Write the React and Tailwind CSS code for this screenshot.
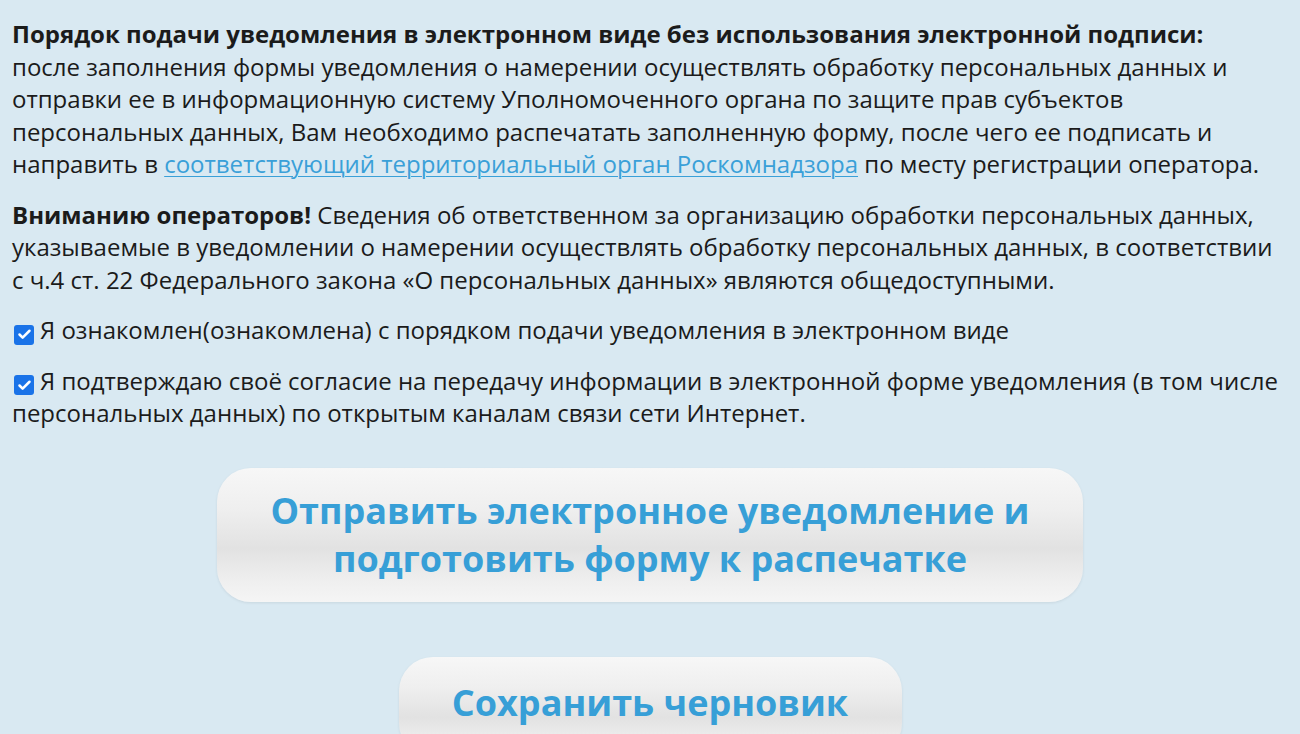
import { Check } from 'lucide-react';

const CheckBox = () => (
  <span className="inline-flex items-center justify-center w-[20px] h-[20px] rounded-[3px] bg-[#1a73e8] align-[-3px] mr-[6px] ml-[2px]">
    <Check className="w-[15px] h-[15px] text-white" strokeWidth={4} />
  </span>
);

const btn =
  'rounded-[34px] font-bold text-[#379fd7] text-[36px] leading-[48px] text-center shadow-[0_1px_3px_rgba(0,0,0,0.08)] bg-[linear-gradient(180deg,#f7f7f7_0%,#efefef_30%,#e2e2e2_60%,#efefef_85%,#f5f5f5_100%)]';

export default function App() {
  return (
    <div className="min-h-[734px] bg-[#d9e9f2] px-[12px] pt-[18px] text-[#1b1b1b] text-[24px] leading-[32.5px] font-['Open_Sans','Noto_Sans',sans-serif] overflow-hidden">
      <div className="pr-[5px]">
        <p className="mb-[18px]">
          <b className="font-bold">Порядок подачи уведомления в электронном виде без использования электронной подписи:</b>
          <br />
          после заполнения формы уведомления о намерении осуществлять обработку персональных данных и
          отправки ее в информационную систему Уполномоченного органа по защите прав субъектов
          персональных данных, Вам необходимо распечатать заполненную форму, после чего ее подписать и
          направить в{' '}
          <a href="#" className="text-[#3aa0d8] underline underline-offset-[3px] decoration-1">
            соответствующий территориальный орган Роскомнадзора
          </a>{' '}
          по месту регистрации оператора.
        </p>

        <p className="mb-[18px]">
          <b className="font-bold">Вниманию операторов!</b> Сведения об ответственном за организацию обработки
          персональных данных, указываемые в уведомлении о намерении осуществлять обработку персональных
          данных, в соответствии с ч.4 ст. 22 Федерального закона «О персональных данных» являются
          общедоступными.
        </p>

        <p className="mb-[18px]">
          <CheckBox />Я ознакомлен(ознакомлена) с порядком подачи уведомления в электронном виде
        </p>

        <p className="mb-[38px]">
          <CheckBox />Я подтверждаю своё согласие на передачу информации в электронной форме уведомления (в том числе
          персональных данных) по открытым каналам связи сети Интернет.
        </p>
      </div>

      <div className="flex flex-col items-center gap-[55px]">
        <button className={`${btn} w-[866px] h-[134px] pt-[1px]`}>
          Отправить электронное уведомление и
          <br />
          подготовить форму к распечатке
        </button>
        <button className={`${btn} w-[503px] h-[100px] pb-[8px]`}>Сохранить черновик</button>
      </div>
    </div>
  );
}
